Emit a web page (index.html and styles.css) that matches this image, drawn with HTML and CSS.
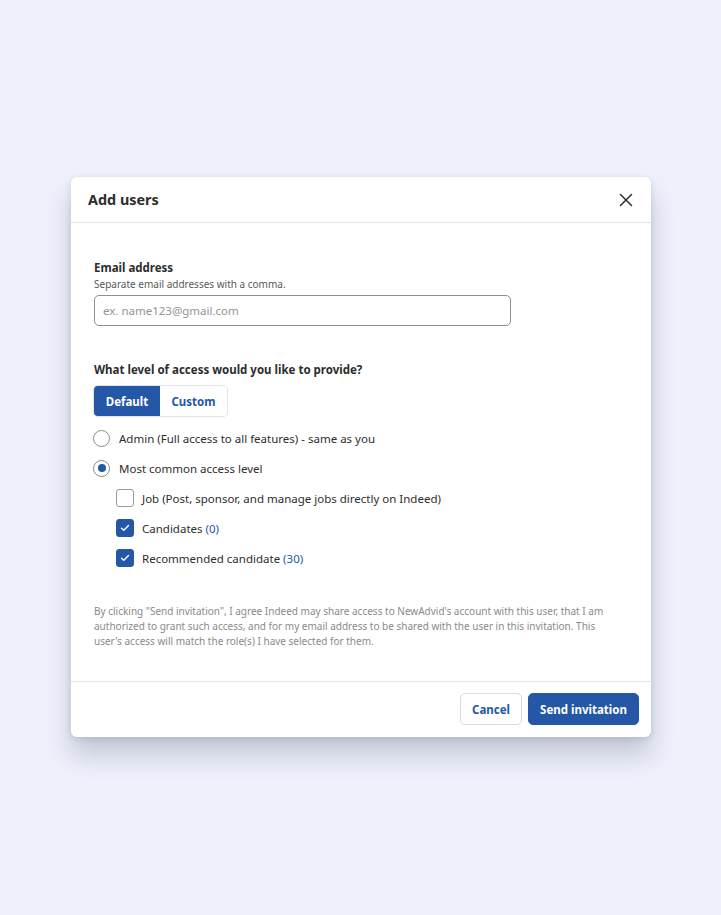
FILE: index.html
```html
<!DOCTYPE html>
<html lang="en">
<head>
<meta charset="utf-8">
<title>Add users</title>
<link rel="stylesheet" href="styles.css">
</head>
<body>
<div class="page">
  <div class="modal">
    <div class="modal-header">
      <h2 class="title">Add users</h2>
      <button class="close" aria-label="Close">
        <svg width="14" height="14" viewBox="0 0 14 14"><path d="M1.5 1.5 L12.5 12.5 M12.5 1.5 L1.5 12.5" stroke="#2d2d2d" stroke-width="1.5" stroke-linecap="round"/></svg>
      </button>
    </div>
    <div class="modal-body">
      <div class="field">
        <div class="label">Email address</div>
        <div class="hint">Separate email addresses with a comma.</div>
        <div class="input"><span class="placeholder">ex. name123@gmail.com</span></div>
      </div>
      <div class="access">
        <div class="label">What level of access would you like to provide?</div>
        <div class="segmented">
          <span class="seg seg-active">Default</span>
          <span class="seg">Custom</span>
        </div>
        <div class="options">
          <div class="row"><span class="radio"></span><span>Admin (Full access to all features) - same as you</span></div>
          <div class="row"><span class="radio radio-on"></span><span>Most common access level</span></div>
          <div class="row sub"><span class="check"></span><span>Job (Post, sponsor, and manage jobs directly on Indeed)</span></div>
          <div class="row sub"><span class="check check-on"><svg width="10" height="8" viewBox="0 0 10 8"><path d="M1.5 4.2 L3.8 6.3 L8.5 1.6" fill="none" stroke="#fff" stroke-width="1.4" stroke-linecap="round" stroke-linejoin="round"/></svg></span><span>Candidates <span class="count">(0)</span></span></div>
          <div class="row sub"><span class="check check-on"><svg width="10" height="8" viewBox="0 0 10 8"><path d="M1.5 4.2 L3.8 6.3 L8.5 1.6" fill="none" stroke="#fff" stroke-width="1.4" stroke-linecap="round" stroke-linejoin="round"/></svg></span><span>Recommended candidate <span class="count">(30)</span></span></div>
        </div>
      </div>
      <p class="legal">By clicking "Send invitation", I agree Indeed may share access to NewAdvid's account with this user, that I am authorized to grant such access, and for my email address to be shared with the user in this invitation. This user's access will match the role(s) I have selected for them.</p>
    </div>
    <div class="modal-footer">
      <button class="btn btn-secondary">Cancel</button>
      <button class="btn btn-primary">Send invitation</button>
    </div>
  </div>
</div>
</body>
</html>
```
FILE: styles.css
```css
* { box-sizing: border-box; }
html, body { margin: 0; padding: 0; }
body {
  background: #eef0fc;
  font-family: "Noto Sans", "Open Sans", sans-serif;
  color: #2d2d2d;
  width: 721px;
  height: 915px;
}
.page {
  padding-top: 177px;
  padding-left: 71px;
}
.modal {
  width: 580px;
  background: #fff;
  border-radius: 6px;
  box-shadow: 0 18px 26px rgba(30, 35, 60, 0.2), 0 2px 6px rgba(30, 35, 60, 0.12);
}
.modal-header {
  height: 46px;
  display: flex;
  align-items: center;
  justify-content: space-between;
  padding: 0 18px 0 17px;
  border-bottom: 1px solid #e4e4e7;
}
.title {
  margin: 0;
  font-size: 14.4px;
  font-weight: 700;
  color: #2d2d2d;
}
.close {
  border: 0;
  background: none;
  padding: 0;
  width: 14px;
  height: 14px;
  display: flex;
}
.modal-body {
  padding: 37px 23px 32px;
}
.label {
  font-size: 11.5px;
  font-weight: 700;
  line-height: 16px;
  color: #2d2d2d;
}
.hint {
  font-size: 10px;
  line-height: 14px;
  color: #595959;
  margin-top: 1px;
}
.input {
  margin-top: 4px;
  width: 417px;
  height: 31px;
  border: 1px solid #8f8f8f;
  border-radius: 5px;
  display: flex;
  align-items: center;
  padding: 0 8px;
}
.placeholder {
  font-size: 11.5px;
  color: #949494;
}
.access {
  margin-top: 36px;
}
.segmented {
  margin-top: 7px;
  margin-left: -1px;
  display: inline-flex;
  border: 1px solid #e2e2e2;
  border-radius: 5px;
  overflow: hidden;
  height: 32px;
}
.seg {
  display: flex;
  align-items: center;
  justify-content: center;
  width: 67px;
  font-size: 11.5px;
  font-weight: 700;
  color: #2557a7;
  background: #fff;
}
.seg-active {
  width: 66px;
  background: #2557a7;
  color: #fff;
}
.options {
  display: flex;
  flex-direction: column;
  margin-top: 6px;
}
.row {
  display: flex;
  align-items: center;
  height: 30px;
  gap: 9px;
  font-size: 11.5px;
  color: #2d2d2d;
}
.row.sub {
  padding-left: 22px;
  gap: 8px;
}
.radio {
  width: 17px;
  height: 17px;
  border-radius: 50%;
  border: 1px solid #8a8a8a;
  display: flex;
  align-items: center;
  justify-content: center;
  flex: none;
  margin-left: -1px;
}
.radio-on::after {
  content: "";
  width: 8px;
  height: 8px;
  border-radius: 50%;
  background: #2557a7;
}
.check {
  width: 18px;
  height: 18px;
  border-radius: 3px;
  border: 1px solid #9a9a9a;
  display: flex;
  align-items: center;
  justify-content: center;
  flex: none;
}
.check-on {
  background: #2557a7;
  border-color: #2557a7;
}
.count {
  color: #2557a7;
}
.legal {
  margin: 31px 0 0;
  font-size: 10px;
  line-height: 15px;
  color: #8a8a8a;
  padding-right: 20px;
}
.modal-footer {
  border-top: 1px solid #e4e4e7;
  display: flex;
  justify-content: flex-end;
  gap: 6px;
  padding: 11px 12px 12px;
}
.btn {
  height: 32px;
  border-radius: 5px;
  font-family: inherit;
  font-size: 11.5px;
  font-weight: 700;
  padding: 0;
  white-space: nowrap;
  cursor: pointer;
}
.btn-secondary {
  background: #fff;
  border: 1px solid #dcdcdc;
  color: #2557a7;
  width: 62px;
}
.btn-primary {
  background: #2557a7;
  border: 1px solid #2557a7;
  color: #fff;
  width: 111px;
}
```
